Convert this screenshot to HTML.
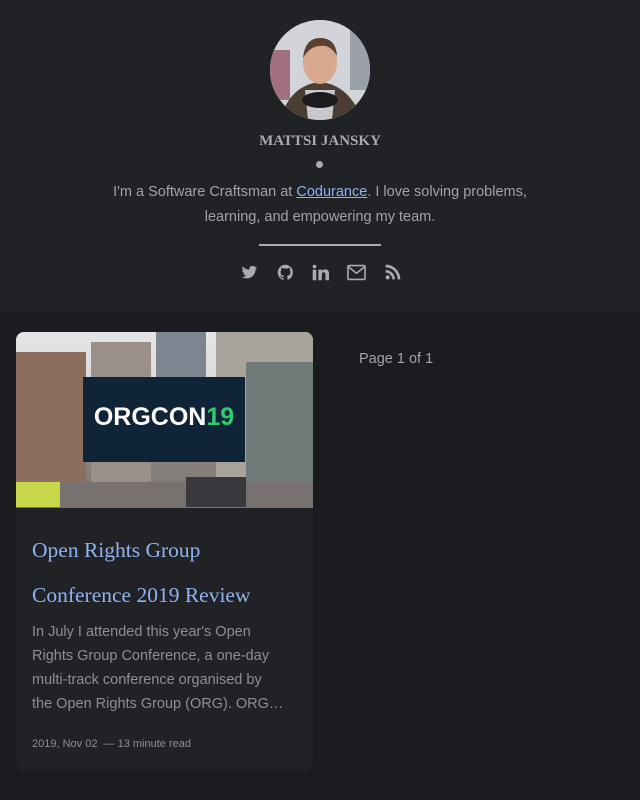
<!DOCTYPE html>
<html><head><meta charset="utf-8"><style>
*{margin:0;padding:0;box-sizing:border-box}
body{width:640px;height:800px;background:#1b1c20;font-family:"Liberation Sans",sans-serif;overflow:hidden;position:relative}
header{position:absolute;left:0;top:0;width:640px;height:312px;background:#212226}
.av{position:absolute;left:270px;top:20px;width:100px;height:100px;border-radius:50%;overflow:hidden;background:#c9ccd6}
.name{position:absolute;top:133px;width:640px;text-align:center;font-family:"Liberation Serif",serif;font-weight:bold;font-size:15px;color:#a9abaf}
.dot{position:absolute;left:316px;top:161px;width:7px;height:7px;border-radius:50%;background:#a9abaf}
.bio{position:absolute;top:180px;left:60px;width:520px;text-align:center;font-size:14.5px;line-height:25px;color:#a2a4a8;white-space:nowrap}
.bio a{color:#8fb3f0;text-decoration:underline}
.hr{position:absolute;left:259px;top:244px;width:122px;height:2px;background:#a9abaf}
.icons{position:absolute;top:264px;left:0;width:640px;height:20px}
.icons svg{position:absolute;top:0}
.card{position:absolute;left:16px;top:332px;width:297px;height:439px;background:#212226;border-radius:8px;overflow:hidden}
.img{position:relative;height:176px;background:linear-gradient(#e4e5e8 0,#d9d7d6 40%,#8a8380 70%,#7a7472 100%)}
.t{position:absolute;left:16px;top:196px;width:270px;font-family:"Liberation Serif",serif;font-size:21.5px;line-height:45px;color:#8fb3f0;white-space:nowrap}
.ex{position:absolute;left:16px;top:288px;width:280px;font-size:14.5px;line-height:24px;color:#8d8f94;white-space:nowrap}
.meta{position:absolute;left:16px;top:406px;font-size:11px;color:#8d8f94}
.page{position:absolute;left:359px;top:351px;font-size:14.5px;color:#a2a4a8}
</style></head><body>
<header>
<div class="av"><svg width="100" height="100">
<rect width="100" height="100" fill="#d2d4da"/>
<rect x="0" y="30" width="20" height="50" fill="#a07080"/>
<rect x="80" y="10" width="20" height="60" fill="#9aa0aa"/>
<path d="M10 100 Q20 65 50 62 Q80 65 92 100Z" fill="#4a3e32"/>
<path d="M35 70 L65 70 L62 100 L38 100Z" fill="#c8c8cc"/>
<ellipse cx="50" cy="80" rx="18" ry="8" fill="#1c1c1e"/>
<ellipse cx="50" cy="42" rx="17" ry="22" fill="#d8a88e"/>
<path d="M33 38 Q35 18 50 18 Q66 18 67 36 Q60 24 50 26 Q40 26 33 38Z" fill="#5a4030"/>
</svg></div>
<div class="name">MATTSI JANSKY</div>
<div class="dot"></div>
<div class="bio">I'm a Software Craftsman at <a>Codurance</a>. I love solving problems,<br>learning, and empowering my team.</div>
<div class="hr"></div>
<div class="icons">
<svg style="left:241px" width="17" height="17" viewBox="0 0 24 24"><path fill="#a9abaf" d="M23 5a9 9 0 0 1-2.6.7A4.5 4.5 0 0 0 22.3 3a9 9 0 0 1-2.9 1.1A4.5 4.5 0 0 0 11.7 8 12.8 12.8 0 0 1 2.4 3.3a4.5 4.5 0 0 0 1.4 6 4.5 4.5 0 0 1-2-.6 4.5 4.5 0 0 0 3.6 4.5 4.5 4.5 0 0 1-2 .1 4.5 4.5 0 0 0 4.2 3.1A9 9 0 0 1 1 18.3 12.8 12.8 0 0 0 7.9 20.3c8.300 0 12.8-6.9 12.8-12.8v-.6A9 9 0 0 0 23 5z"/></svg>
<svg style="left:277px" width="17" height="17" viewBox="0 0 24 24"><path fill="#a9abaf" d="M12 1a11 11 0 0 0-3.5 21.4c.6.1.8-.2.8-.5v-2c-3.1.7-3.7-1.4-3.7-1.4-.5-1.3-1.2-1.6-1.2-1.6-1-.7.1-.7.1-.7 1.1.1 1.700 1.100 1.7 1.1 1 1.7 2.6 1.2 3.2.9.1-.7.4-1.2.7-1.5-2.4-.3-5-1.2-5-5.4 0-1.2.4-2.2 1.1-3-.1-.3-.5-1.4.1-2.9 0 0 .9-.3 3 1.1a10 10 0 0 1 5.5 0c2.1-1.4 3-1.1 3-1.1.6 1.5.2 2.6.1 2.9.7.8 1.1 1.8 1.1 3 0 4.2-2.6 5.1-5 5.4.4.3.7 1 .7 2v3c0 .3.2.6.8.5A11 11 0 0 0 12 1z"/></svg>
<svg style="left:312px" width="17" height="17" viewBox="0 0 24 24"><path fill="#a9abaf" d="M1 8h5v15H1zM3.5 1a2.6 2.6 0 1 1 0 5.2 2.6 2.6 0 0 1 0-5.2zM9 8h4.8v2c.7-1.3 2.3-2.5 4.7-2.5 5 0 5.5 3.2 5.5 7.4V23h-5v-7.3c0-1.8 0-4-2.4-4s-2.8 1.9-2.8 3.9V23H9z"/></svg>
<svg style="left:347px" width="19" height="17" viewBox="0 0 24 20"><rect x="1.2" y="1.2" width="21.6" height="17.6" rx="1.5" fill="none" stroke="#a9abaf" stroke-width="2"/><path d="M2 3l10 8 10-8" fill="none" stroke="#a9abaf" stroke-width="2"/></svg>
<svg style="left:385px" width="16" height="16" viewBox="0 0 24 24"><circle cx="4" cy="20" r="3" fill="#a9abaf"/><path d="M1 9a14 14 0 0 1 14 14h-4A10 10 0 0 0 1 13zM1 1a22 22 0 0 1 22 22h-4A18 18 0 0 0 1 5z" fill="#a9abaf"/></svg>
</div>
</header>
<div class="card">
<div class="img"><svg width="297" height="176" style="position:absolute;left:0;top:0">
<rect x="0" y="20" width="70" height="150" fill="#8b6e5c"/>
<rect x="75" y="10" width="60" height="150" fill="#9a9088"/>
<rect x="140" y="0" width="50" height="80" fill="#7d8591"/>
<rect x="200" y="0" width="97" height="160" fill="#a8a49c"/>
<rect x="230" y="30" width="67" height="120" fill="#6e7b78"/>
<rect x="0" y="150" width="297" height="26" fill="#777270"/>
<rect x="67" y="45" width="162" height="85" fill="#0f2436"/>
<text x="148" y="93" text-anchor="middle" font-family="Liberation Sans" font-weight="bold" font-size="25" fill="#fff">ORGCON<tspan fill="#2ecc71">19</tspan></text>
<rect x="0" y="150" width="44" height="25" fill="#c8d84a"/>
<rect x="170" y="145" width="60" height="30" fill="#3a3a3e"/>
</svg></div>
<div class="t">Open Rights Group<br>Conference 2019 Review</div>
<div class="ex">In July I attended this year's Open<br>Rights Group Conference, a one-day<br>multi-track conference organised by<br>the Open Rights Group (ORG). ORG…</div>
<div class="meta">2019, Nov 02 &nbsp;— 13 minute read</div>
</div>
<div class="page">Page 1 of 1</div>
</body></html>
